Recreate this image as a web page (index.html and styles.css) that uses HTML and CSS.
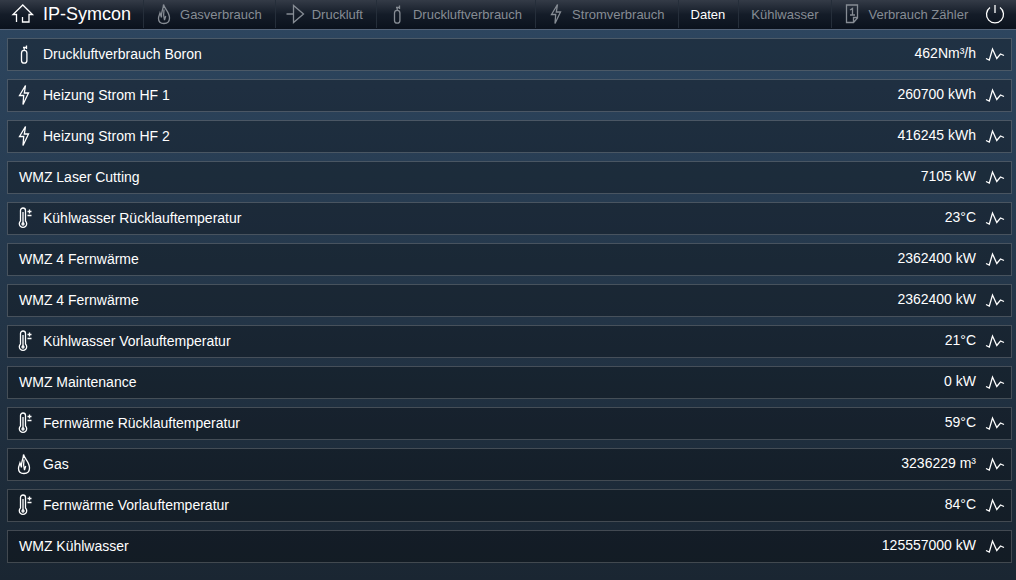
FILE: index.html
```
<!DOCTYPE html>
<html lang="de">
<head>
    <meta charset="UTF-8">
    <meta name="viewport" content="width=device-width, initial-scale=1.0">
    <title>IP-Symcon</title>
    <link rel="stylesheet" href="styles.css">
</head>
<body>
    <!-- icon set -->
    <svg class="icon-defs" aria-hidden="true">
        <symbol id="home" viewBox="0 0 24 24">
            <path d="M5.500 20v-7.500H2L11.800 3l9.700 9.500H18V20h-6.500v-5"/>
        </symbol>
        <symbol id="gas" viewBox="0 0 24 24">
            <path d="M11.500 2.500C12.500 7 17.500 10 17.500 16c0 3.500-2 5.500-5.500 5.500S6.500 19.500 6.500 16.500c0-2.500 1-3.500 1.500-5.500l1.500 4.500C8.500 10.500 11.500 7.500 11.500 2.500z"/>
            <path d="M12 7.500c-.5 3-1 6 .5 10.500M12.500 18l1.200-4"/>
        </symbol>
        <symbol id="air" viewBox="0 0 24 24">
            <path d="M2.500 12h7M9.500 3.500v17L19.500 12z"/>
        </symbol>
        <symbol id="bottle" viewBox="0 0 24 24">
            <path d="M9.500 11a2.700 2.700 0 0 1 5.400 0v7.500a2.700 2.700 0 0 1-5.400 0zM12.200 8.500V5.500M11 5.500h4M14.500 3.500v3.500"/>
        </symbol>
        <symbol id="power" viewBox="0 0 24 24">
            <path d="M13.500 2.500 7.500 12.500h4.200L11 21.500 16.500 10h-4.200l1.200-7.500z"/>
        </symbol>
        <symbol id="temp" viewBox="0 0 24 24">
            <path d="M8.500 15V4.500a2.500 2.500 0 0 1 5 0V15a3.700 3.700 0 1 1-5 0zM11 6v11M15.500 5.500h4M17.500 3.500v4M15.500 9.500h4"/>
            <circle cx="11" cy="18" r="1"/>
        </symbol>
        <symbol id="note" viewBox="0 0 24 24">
            <path d="M6.500 3h11v13l-4 4.500h-7zM17.500 15.500h-4v5M10 8l2.500-1.500V13M10 13h5"/>
        </symbol>
        <symbol id="graph" viewBox="0 0 20 20">
            <path d="M1 14.500l3.300 1.500L7.500 5l4.300 9.500 3.700-4.500 3.500 1.500"/>
        </symbol>
        <symbol id="off" viewBox="0 0 24 24">
            <path d="M12 3v8M7 5.500a8.500 8.500 0 1 0 10 0"/>
        </symbol>
    </svg>

    <header class="header">
        <a class="brand" href="#"><svg class="icon"><use href="#home"/></svg><span>IP-Symcon</span></a>
        <nav class="tabs">
            <a class="tab" href="#"><svg class="icon"><use href="#gas"/></svg><span>Gasverbrauch</span></a>
            <a class="tab" href="#"><svg class="icon"><use href="#air"/></svg><span>Druckluft</span></a>
            <a class="tab" href="#"><svg class="icon"><use href="#bottle"/></svg><span>Druckluftverbrauch</span></a>
            <a class="tab" href="#"><svg class="icon"><use href="#power"/></svg><span>Stromverbrauch</span></a>
            <a class="tab active" href="#"><span>Daten</span></a>
            <a class="tab" href="#"><span>Kühlwasser</span></a>
            <a class="tab" href="#"><svg class="icon"><use href="#note"/></svg><span>Verbrauch Zähler</span></a>
        </nav>
        <button class="logout" type="button" aria-label="Abmelden"><svg class="icon"><use href="#off"/></svg></button>
    </header>

    <main>
        <ul class="list">
            <li class="row">
                <svg class="icon"><use href="#bottle"/></svg>
                <span class="name">Druckluftverbrauch Boron</span>
                <span class="value">462Nm³/h</span>
                <button class="graph" type="button" aria-label="Graph"><svg><use href="#graph"/></svg></button>
            </li>
            <li class="row">
                <svg class="icon"><use href="#power"/></svg>
                <span class="name">Heizung Strom HF 1</span>
                <span class="value">260700 kWh</span>
                <button class="graph" type="button" aria-label="Graph"><svg><use href="#graph"/></svg></button>
            </li>
            <li class="row">
                <svg class="icon"><use href="#power"/></svg>
                <span class="name">Heizung Strom HF 2</span>
                <span class="value">416245 kWh</span>
                <button class="graph" type="button" aria-label="Graph"><svg><use href="#graph"/></svg></button>
            </li>
            <li class="row">
                <span class="name">WMZ Laser Cutting</span>
                <span class="value">7105 kW</span>
                <button class="graph" type="button" aria-label="Graph"><svg><use href="#graph"/></svg></button>
            </li>
            <li class="row">
                <svg class="icon"><use href="#temp"/></svg>
                <span class="name">Kühlwasser Rücklauftemperatur</span>
                <span class="value">23°C</span>
                <button class="graph" type="button" aria-label="Graph"><svg><use href="#graph"/></svg></button>
            </li>
            <li class="row">
                <span class="name">WMZ 4 Fernwärme</span>
                <span class="value">2362400 kW</span>
                <button class="graph" type="button" aria-label="Graph"><svg><use href="#graph"/></svg></button>
            </li>
            <li class="row">
                <span class="name">WMZ 4 Fernwärme</span>
                <span class="value">2362400 kW</span>
                <button class="graph" type="button" aria-label="Graph"><svg><use href="#graph"/></svg></button>
            </li>
            <li class="row">
                <svg class="icon"><use href="#temp"/></svg>
                <span class="name">Kühlwasser Vorlauftemperatur</span>
                <span class="value">21°C</span>
                <button class="graph" type="button" aria-label="Graph"><svg><use href="#graph"/></svg></button>
            </li>
            <li class="row">
                <span class="name">WMZ Maintenance</span>
                <span class="value">0 kW</span>
                <button class="graph" type="button" aria-label="Graph"><svg><use href="#graph"/></svg></button>
            </li>
            <li class="row">
                <svg class="icon"><use href="#temp"/></svg>
                <span class="name">Fernwärme Rücklauftemperatur</span>
                <span class="value">59°C</span>
                <button class="graph" type="button" aria-label="Graph"><svg><use href="#graph"/></svg></button>
            </li>
            <li class="row">
                <svg class="icon"><use href="#gas"/></svg>
                <span class="name">Gas</span>
                <span class="value">3236229 m³</span>
                <button class="graph" type="button" aria-label="Graph"><svg><use href="#graph"/></svg></button>
            </li>
            <li class="row">
                <svg class="icon"><use href="#temp"/></svg>
                <span class="name">Fernwärme Vorlauftemperatur</span>
                <span class="value">84°C</span>
                <button class="graph" type="button" aria-label="Graph"><svg><use href="#graph"/></svg></button>
            </li>
            <li class="row">
                <span class="name">WMZ Kühlwasser</span>
                <span class="value">125557000 kW</span>
                <button class="graph" type="button" aria-label="Graph"><svg><use href="#graph"/></svg></button>
            </li>
        </ul>
    </main>
</body>
</html>
```
FILE: styles.css
```
* {
    box-sizing: border-box;
}
html {
    min-height: 100%;
    background: linear-gradient(#2e4761, #1a2632);
}
body {
    margin: 0;
    font-family: "Liberation Sans", Arial, sans-serif;
    font-size: 14px;
    color: #fff;
}
svg {
    display: block;
    fill: none;
    stroke: currentColor;
    stroke-width: 1.3;
}
.icon-defs {
    position: absolute;
    width: 0;
    height: 0;
}
.icon {
    flex: none;
    width: 24px;
    height: 24px;
}
button {
    padding: 0;
    border: 0;
    background: none;
    color: inherit;
    cursor: pointer;
}

/* header */
.header {
    display: flex;
    height: 30px;
    padding-bottom: 1px;
    border-bottom: 1px solid #56657a;
    background: linear-gradient(#343b47, #141c28 50%, #0b121d);
    white-space: nowrap;
}
.header a {
    display: flex;
    align-items: center;
    color: inherit;
    text-decoration: none;
}
.brand {
    gap: 8px;
    padding: 0 12px 0 11px;
    font-size: 18px;
}
.tabs {
    display: flex;
    flex: 1;
    font-size: 13px;
}
.tab {
    gap: 4px;
    padding: 0 13px 0 12px;
    border-left: 1px solid #252e3a;
}
.header .tab {
    color: #868c94;
}
.tab .icon {
    margin-left: -4px;
}
.header .active {
    color: #fff;
}
.logout {
    padding-right: 9px;
}

/* variable list */
.list {
    display: flex;
    flex-direction: column;
    gap: 8px;
    margin: 0;
    padding: 8px 4px 17px 7px;
    list-style: none;
}
.row {
    display: flex;
    align-items: center;
    height: 33px;
    padding: 0 6px 2px 4px;
    border: 1px solid rgba(255, 255, 255, 0.2);
    background: rgba(0, 0, 0, 0.28);
}
.name {
    flex: 1;
    padding-left: 7px;
}
.value {
    padding-bottom: 2px;
}
.graph {
    margin-left: 9px;
}
.graph svg {
    width: 20px;
    height: 20px;
}
```
